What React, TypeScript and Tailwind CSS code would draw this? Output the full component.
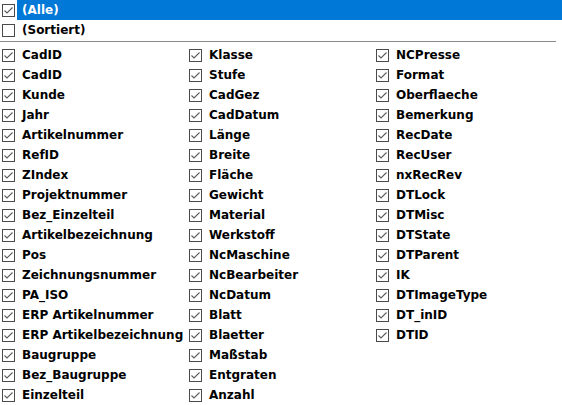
const col1 = [
  "CadID",
  "CadID",
  "Kunde",
  "Jahr",
  "Artikelnummer",
  "RefID",
  "ZIndex",
  "Projektnummer",
  "Bez_Einzelteil",
  "Artikelbezeichnung",
  "Pos",
  "Zeichnungsnummer",
  "PA_ISO",
  "ERP Artikelnummer",
  "ERP Artikelbezeichnung",
  "Baugruppe",
  "Bez_Baugruppe",
  "Einzelteil",
];

const col2 = [
  "Klasse",
  "Stufe",
  "CadGez",
  "CadDatum",
  "Länge",
  "Breite",
  "Fläche",
  "Gewicht",
  "Material",
  "Werkstoff",
  "NcMaschine",
  "NcBearbeiter",
  "NcDatum",
  "Blatt",
  "Blaetter",
  "Maßstab",
  "Entgraten",
  "Anzahl",
];

const col3 = [
  "NCPresse",
  "Format",
  "Oberflaeche",
  "Bemerkung",
  "RecDate",
  "RecUser",
  "nxRecRev",
  "DTLock",
  "DTMisc",
  "DTState",
  "DTParent",
  "IK",
  "DTImageType",
  "DT_inID",
  "DTID",
];

function Box({ checked }: { checked: boolean }) {
  return (
    <svg width="13" height="13" viewBox="0 0 13 13" className="shrink-0">
      <rect x="0.5" y="0.5" width="12" height="12" fill="white" stroke="#4a4a4a" />
      {checked && (
        <polyline points="2.5,6.5 5,9 10.5,3.5" fill="none" stroke="#5c5c5c" strokeWidth="1.1" />
      )}
    </svg>
  );
}

function Item({ label, checked = true }: { label: string; checked?: boolean }) {
  return (
    <div className="flex h-5 items-center pl-[2px]">
      <Box checked={checked} />
      <span className="ml-[7px] whitespace-nowrap">{label}</span>
    </div>
  );
}

export default function App() {
  const columns = [col1, col2, col3];
  return (
    <div
      className="h-[405px] w-[562px] overflow-hidden bg-white text-[12px] font-bold text-black"
      style={{ fontFamily: '"DejaVu Sans", sans-serif' }}
    >
      <div className="flex h-5 items-center pl-[2px]">
        <Box checked />
        <div className="ml-[2px] flex h-5 flex-1 items-center bg-[#0078d7] pl-[5px] text-white">(Alle)</div>
      </div>
      <Item label="(Sortiert)" checked={false} />
      <div className="mt-[1px] mb-[3px] h-px w-[556px] bg-[#8a8a8a]" />
      <div className="grid grid-cols-[187px_187px_188px]">
        {columns.map((c, i) => (
          <div key={i}>
            {c.map((l, j) => (
              <Item key={j} label={l} />
            ))}
          </div>
        ))}
      </div>
    </div>
  );
}
